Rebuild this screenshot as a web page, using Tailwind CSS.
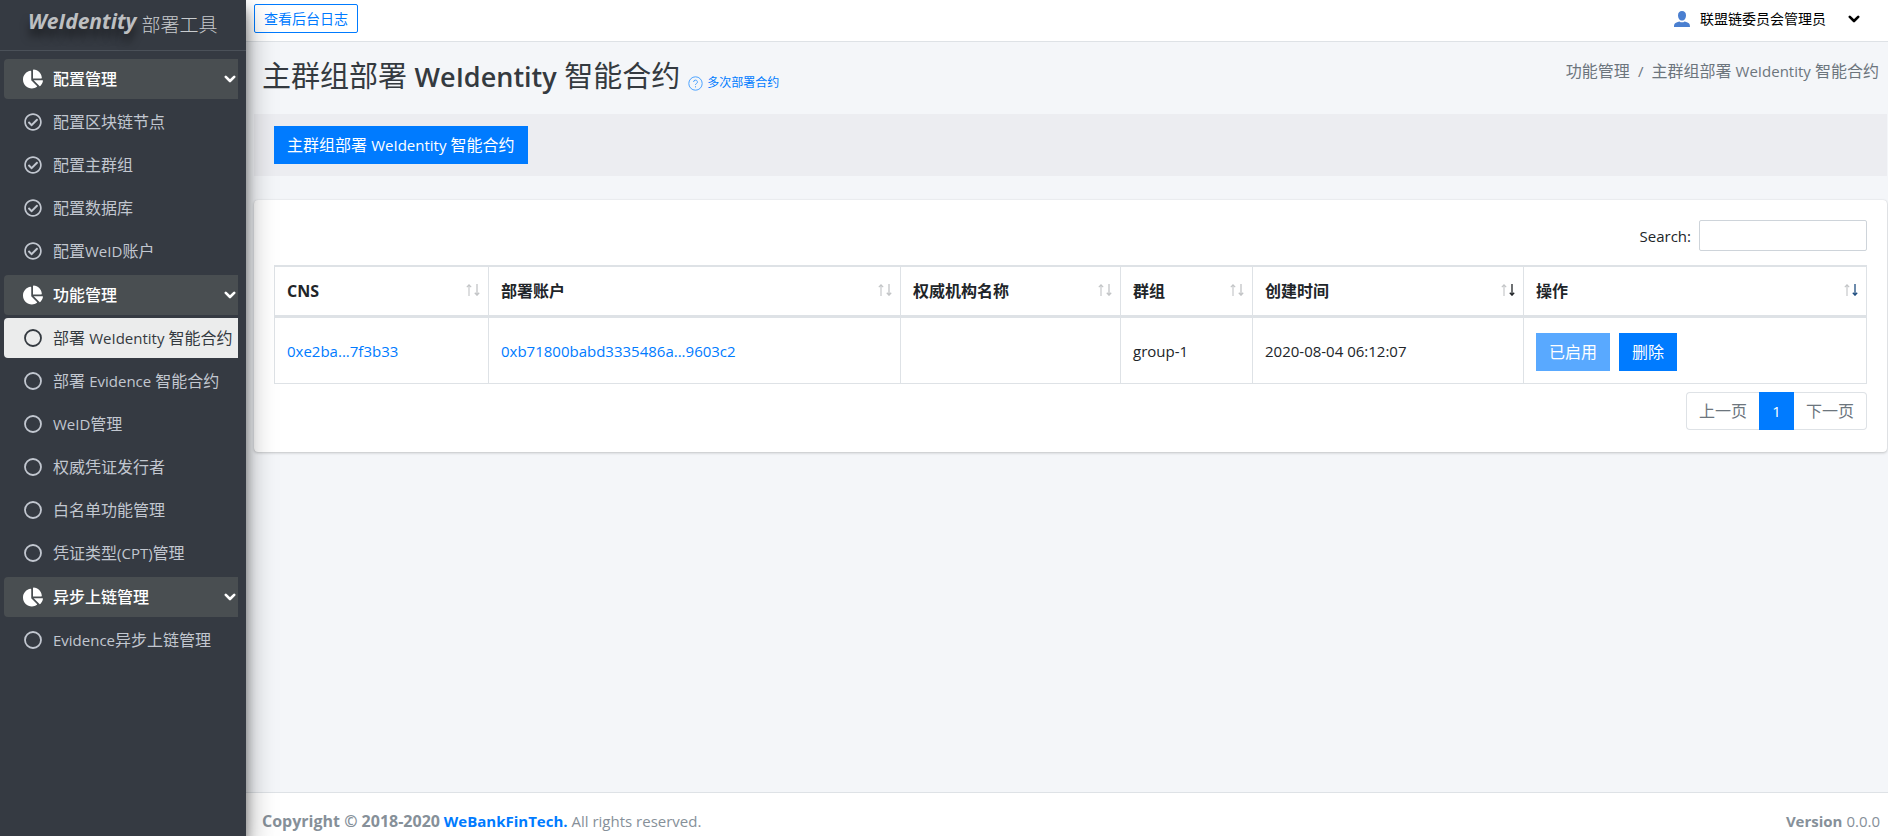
<!DOCTYPE html>
<html lang="zh-CN">
<head>
<meta charset="utf-8">
<meta name="viewport" content="width=device-width, initial-scale=1">
<title>WeIdentity 部署工具</title>
<script src="https://cdn.jsdelivr.net/npm/@tailwindcss/browser@4"></script>
</head>
<body class="flex min-h-screen bg-[#f4f6f9] font-['Open_Sans','Noto_Sans_CJK_SC',sans-serif] text-base leading-6 text-[#212529]">

<svg class="hidden" aria-hidden="true">
  <symbol id="pie" viewBox="0 0 544 512"><path fill="currentColor" d="M527.79 288H290.5l158.03 158.03c6.04 6.04 15.98 6.53 22.19.68 38.7-36.46 65.32-85.61 73.13-140.86 1.34-9.46-6.51-17.85-16.06-17.85zm-15.83-64.8C503.72 103.74 408.26 8.28 288.8.04 279.68-.59 272 7.1 272 16.24V240h223.77c9.14 0 16.82-7.68 16.19-16.8zM224 288V50.71c0-9.55-8.39-17.4-17.84-16.06C86.99 51.49-4.1 155.6.14 280.37 4.5 408.51 114.83 513.59 243.03 511.98c50.4-.63 96.97-16.87 135.26-44.03 7.9-5.6 8.42-17.23 1.57-24.08L224 288z"/></symbol>
  <symbol id="check" viewBox="0 0 512 512"><path fill="currentColor" d="M256 8C119.033 8 8 119.033 8 256s111.033 248 248 248 248-111.033 248-248S392.967 8 256 8zm0 48c110.532 0 200 89.451 200 200 0 110.532-89.451 200-200 200-110.532 0-200-89.451-200-200 0-110.532 89.451-200 200-200m140.204 130.267l-22.536-22.718c-4.667-4.705-12.265-4.736-16.97-.068L215.346 303.697l-59.792-60.277c-4.667-4.705-12.265-4.736-16.97-.069l-22.719 22.536c-4.705 4.667-4.736 12.265-.068 16.971l90.781 91.516c4.667 4.705 12.265 4.736 16.97.068l172.589-171.204c4.704-4.668 4.734-12.266.067-16.971z"/></symbol>
  <symbol id="ring" viewBox="0 0 18 18"><circle cx="9" cy="9" r="8" fill="none" stroke="currentColor" stroke-width="1.8"/></symbol>
  <symbol id="chevron" viewBox="0 0 12 8"><path d="M1.8 1.8 6 6l4.200-4.200" fill="none" stroke="currentColor" stroke-width="2.600" stroke-linecap="round" stroke-linejoin="round"/></symbol>
  <symbol id="up" viewBox="0 0 6 12"><path d="M3 12V1M.8 3.200 3 .8l2.200 2.400" fill="none" stroke="currentColor" stroke-width="1.100"/></symbol>
  <symbol id="down" viewBox="0 0 6 12"><path d="M3 0v11M.8 8.800 3 11.200l2.200-2.400" fill="none" stroke="currentColor" stroke-width="1.300"/></symbol>
</svg>

<aside class="relative z-10 flex w-[246px] shrink-0 flex-col bg-[#353a42] text-[#c2c7d0] shadow-[0_14px_28px_rgba(0,0,0,0.4),0_10px_10px_rgba(0,0,0,0.36)]">
  <a href="#" class="flex h-[51px] items-center gap-[5px] border-b border-[#4b5159] pb-2 pl-7 text-[#c8cbce]">
    <span class="text-[21px] font-bold italic leading-6 text-[#bdbfc1] [text-shadow:0_8px_8px_rgba(0,0,0,0.5)]">WeIdentity</span>
    <span class="pt-2 text-[19px] font-light">部署工具</span>
  </a>
  <nav class="flex flex-col gap-1 pl-1 pr-2 pt-2">
    <section class="flex flex-col gap-[3px]">
      <button class="flex h-10 items-center gap-2.5 rounded-l bg-[#494e51] pl-[19px] pr-0.5 text-left font-medium text-white"><svg class="h-5 w-5"><use href="#pie"/></svg><span class="flex-1">配置管理</span><svg class="h-2 w-3"><use href="#chevron"/></svg></button>
      <a href="#" class="flex h-10 items-center gap-[11px] whitespace-nowrap pl-5"><svg class="h-[18px] w-[18px] shrink-0"><use href="#check"/></svg><span>配置区块链节点</span></a>
      <a href="#" class="flex h-10 items-center gap-[11px] whitespace-nowrap pl-5"><svg class="h-[18px] w-[18px] shrink-0"><use href="#check"/></svg><span>配置主群组</span></a>
      <a href="#" class="flex h-10 items-center gap-[11px] whitespace-nowrap pl-5"><svg class="h-[18px] w-[18px] shrink-0"><use href="#check"/></svg><span>配置数据库</span></a>
      <a href="#" class="flex h-10 items-center gap-[11px] whitespace-nowrap pl-5"><svg class="h-[18px] w-[18px] shrink-0"><use href="#check"/></svg><span>配置<span class="text-[15px]">WeID</span>账户</span></a>
    </section>
    <section class="flex flex-col gap-[3px]">
      <button class="flex h-10 items-center gap-2.5 rounded-l bg-[#494e51] pl-[19px] pr-0.5 text-left font-medium text-white"><svg class="h-5 w-5"><use href="#pie"/></svg><span class="flex-1">功能管理</span><svg class="h-2 w-3"><use href="#chevron"/></svg></button>
      <a href="#" aria-current="page" class="flex h-10 items-center gap-[11px] whitespace-nowrap rounded-l bg-[#ebecec] pl-5 text-[#343a40]"><svg class="h-[18px] w-[18px] shrink-0"><use href="#ring"/></svg><span>部署 <span class="text-[15px]">WeIdentity</span> 智能合约</span></a>
      <a href="#" class="flex h-10 items-center gap-[11px] whitespace-nowrap pl-5"><svg class="h-[18px] w-[18px] shrink-0"><use href="#ring"/></svg><span>部署 <span class="text-[15px]">Evidence</span> 智能合约</span></a>
      <a href="#" class="flex h-10 items-center gap-[11px] whitespace-nowrap pl-5"><svg class="h-[18px] w-[18px] shrink-0"><use href="#ring"/></svg><span><span class="text-[15px]">WeID</span>管理</span></a>
      <a href="#" class="flex h-10 items-center gap-[11px] whitespace-nowrap pl-5"><svg class="h-[18px] w-[18px] shrink-0"><use href="#ring"/></svg><span>权威凭证发行者</span></a>
      <a href="#" class="flex h-10 items-center gap-[11px] whitespace-nowrap pl-5"><svg class="h-[18px] w-[18px] shrink-0"><use href="#ring"/></svg><span>白名单功能管理</span></a>
      <a href="#" class="flex h-10 items-center gap-[11px] whitespace-nowrap pl-5"><svg class="h-[18px] w-[18px] shrink-0"><use href="#ring"/></svg><span>凭证类型<span class="text-[15px]">(CPT)</span>管理</span></a>
    </section>
    <section class="flex flex-col gap-[3px]">
      <button class="flex h-10 items-center gap-2.5 rounded-l bg-[#494e51] pl-[19px] pr-0.5 text-left font-medium text-white"><svg class="h-5 w-5"><use href="#pie"/></svg><span class="flex-1">异步上链管理</span><svg class="h-2 w-3"><use href="#chevron"/></svg></button>
      <a href="#" class="flex h-10 items-center gap-[11px] whitespace-nowrap pl-5"><svg class="h-[18px] w-[18px] shrink-0"><use href="#ring"/></svg><span><span class="text-[15px]">Evidence</span>异步上链管理</span></a>
    </section>
  </nav>
</aside>

<div class="flex min-w-0 flex-1 flex-col">
  <header class="flex h-[42px] items-start justify-between border-b border-[#dee2e6] bg-white pl-2 pr-7 pt-1">
    <button class="flex h-[29px] items-center rounded-xs border border-[#007bff] px-[9px] text-sm text-[#007bff]">查看后台日志</button>
    <button class="flex h-[30px] items-center text-sm text-black">
      <svg class="mr-2.5 h-4 w-4" viewBox="0 0 16 16" fill="#4a7fd0"><path d="M8 0c2.500 0 4 1.700 4 4.200C12 7.200 10.500 9.500 8 9.500S4 7.200 4 4.200C4 1.700 5.500 0 8 0z"/><path d="M0 16c0-3.500.6-4.300 5.400-5.600C6.200 11 7 11.300 8 11.300s1.800-.3 2.600-.9C15.400 11.700 16 12.500 16 16z"/></svg>
      <span class="mr-[22px]">联盟链委员会管理员</span>
      <svg class="h-2 w-3"><use href="#chevron"/></svg>
    </button>
  </header>

  <main class="flex-1 pl-2 pr-px">
    <div class="flex h-[72px] items-start justify-between px-2 pt-4">
      <h1 class="flex items-end text-[29px] leading-9 text-[#343a40]">
        <span>主群组部署 <span class="text-[27px] font-semibold">WeIdentity</span> 智能合约</span>
        <a href="#" class="mb-0.5 ml-2 flex items-center gap-1 text-xs leading-5 text-[#007bff]">
          <svg class="h-[15px] w-[15px]" viewBox="0 0 15 15" fill="none" stroke="#4da3ff"><circle cx="7.500" cy="7.500" r="6.700"/><path d="M5.600 6a1.900 1.900 0 1 1 2.700 1.700c-.6.3-.8.6-.8 1.300M7.500 10.200v1.200"/></svg>
          <span>多次部署合约</span>
        </a>
      </h1>
      <ol class="flex gap-2 pt-px text-[#6c757d]">
        <li>功能管理</li><li class="text-[15px]">/</li><li>主群组部署 <span class="text-[15px]">WeIdentity</span> 智能合约</li>
      </ol>
    </div>

    <div class="bg-[#ecedf1] px-5 py-3">
      <button class="h-[38px] bg-[#007bff] px-[13px] text-white">主群组部署 <span class="text-[15px]">WeIdentity</span> 智能合约</button>
    </div>

    <section class="mt-6 rounded bg-white px-5 pb-[22px] pt-5 shadow-[0_0_1px_rgba(0,0,0,0.13),0_1px_3px_rgba(0,0,0,0.2)]">
      <div class="flex items-center justify-end gap-2 text-[15px]">
        <label for="search">Search:</label>
        <input id="search" type="search" class="h-[31px] w-[168px] rounded-xs border border-[#ced4da] bg-white px-2 text-sm">
      </div>

      <table class="mt-3.5 w-full table-fixed border-separate border-spacing-0 border-l border-[#dee2e6] text-left">
        <colgroup><col class="w-[214px]"><col class="w-[412px]"><col class="w-[220px]"><col class="w-[132px]"><col class="w-[271px]"><col></colgroup>
        <thead>
          <tr class="h-[53px]">
            <th class="border-b-3 border-r border-t-2 border-[#dee2e6] pl-3 pr-2 font-bold"><div class="flex items-center justify-between">CNS<span class="flex gap-0.5 pb-0.5 text-[#c2c4c6]"><svg class="h-3 w-1.5"><use href="#up"/></svg><svg class="h-3 w-1.5"><use href="#down"/></svg></span></div></th>
            <th class="border-b-3 border-r border-t-2 border-[#dee2e6] pl-3 pr-2 font-bold"><div class="flex items-center justify-between">部署账户<span class="flex gap-0.5 pb-0.5 text-[#c2c4c6]"><svg class="h-3 w-1.5"><use href="#up"/></svg><svg class="h-3 w-1.5"><use href="#down"/></svg></span></div></th>
            <th class="border-b-3 border-r border-t-2 border-[#dee2e6] pl-3 pr-2 font-bold"><div class="flex items-center justify-between">权威机构名称<span class="flex gap-0.5 pb-0.5 text-[#c2c4c6]"><svg class="h-3 w-1.5"><use href="#up"/></svg><svg class="h-3 w-1.5"><use href="#down"/></svg></span></div></th>
            <th class="border-b-3 border-r border-t-2 border-[#dee2e6] pl-3 pr-2 font-bold"><div class="flex items-center justify-between">群组<span class="flex gap-0.5 pb-0.5 text-[#c2c4c6]"><svg class="h-3 w-1.5"><use href="#up"/></svg><svg class="h-3 w-1.5"><use href="#down"/></svg></span></div></th>
            <th class="border-b-3 border-r border-t-2 border-[#dee2e6] pl-3 pr-2 font-bold"><div class="flex items-center justify-between">创建时间<span class="flex gap-0.5 pb-0.5 text-[#c2c4c6]"><svg class="h-3 w-1.5"><use href="#up"/></svg><svg class="h-3 w-1.5 text-[#212529]"><use href="#down"/></svg></span></div></th>
            <th class="border-b-3 border-r border-t-2 border-[#dee2e6] pl-3 pr-2 font-bold"><div class="flex items-center justify-between">操作<span class="flex gap-0.5 pb-0.5 text-[#c2c4c6]"><svg class="h-3 w-1.5"><use href="#up"/></svg><svg class="h-3 w-1.5 text-[#1f4e80]"><use href="#down"/></svg></span></div></th>
          </tr>
        </thead>
        <tbody class="text-[15px]">
          <tr class="h-[66px]">
            <td class="border-b border-r border-[#dee2e6] px-3"><a href="#" class="text-[#007bff]">0xe2ba...7f3b33</a></td>
            <td class="border-b border-r border-[#dee2e6] px-3"><a href="#" class="text-[#007bff]">0xb71800babd3335486a...9603c2</a></td>
            <td class="border-b border-r border-[#dee2e6] px-3"></td>
            <td class="border-b border-r border-[#dee2e6] px-3">group-1</td>
            <td class="border-b border-r border-[#dee2e6] px-3">2020-08-04 06:12:07</td>
            <td class="border-b border-r border-[#dee2e6] px-3"><div class="flex gap-[9px] pt-0.5 text-base text-white"><button disabled class="h-[38px] bg-[#59a9ff] px-[13px]">已启用</button><button class="h-[38px] bg-[#007bff] px-[13px]">删除</button></div></td>
          </tr>
        </tbody>
      </table>

      <nav class="mt-2 flex justify-end text-[#6c757d]" aria-label="分页">
        <button class="h-[38px] rounded-l border border-r-0 border-[#dee2e6] px-3">上一页</button>
        <button class="h-[38px] w-[35px] bg-[#007bff] text-[15px] text-white" aria-current="page">1</button>
        <button class="h-[38px] rounded-r border border-l-0 border-[#dee2e6] px-3">下一页</button>
      </nav>
    </section>
  </main>

  <footer class="flex h-11 items-end justify-between border-t border-[#dee2e6] bg-white px-4 pb-[3px] pr-2 text-[15px] text-[#869099]">
    <p><strong><span class="text-base">Copyright © 2018-2020</span> <a href="#" class="text-[#007bff]">WeBankFinTech.</a></strong> All rights reserved.</p>
    <p><strong>Version</strong> 0.0.0</p>
  </footer>
</div>
</body>
</html>
